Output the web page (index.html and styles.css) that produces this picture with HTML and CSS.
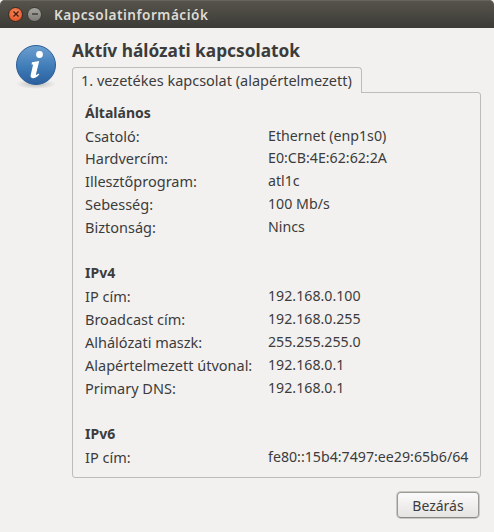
FILE: index.html
```html
<!DOCTYPE html>
<html lang="hu">
<head>
    <meta charset="UTF-8">
    <title>Kapcsolatinformációk</title>
    <link rel="stylesheet" href="styles.css">
</head>
<body>

<div class="window">
    <header class="titlebar">
        <span class="win-btn win-close">
            <svg width="8" height="8" viewBox="0 0 8 8"><path d="M1.5 1.5l5 5M6.5 1.5l-5 5" stroke="#4a1c0c" stroke-width="1.4"/></svg>
        </span>
        <span class="win-btn win-min">
            <svg width="8" height="8" viewBox="0 0 8 8"><path d="M1 4h6" stroke="#3c3b37" stroke-width="1.4"/></svg>
        </span>
        <span class="win-title">Kapcsolatinformációk</span>
    </header>

    <main class="content">
        <div class="icon-col">
            <svg width="42" height="46" viewBox="0 0 42 46">
                <defs>
                    <linearGradient id="ball" x1="0" y1="0" x2="0" y2="1">
                        <stop offset="0" stop-color="#6d9fd0"/>
                        <stop offset="0.55" stop-color="#3f7cb8"/>
                        <stop offset="1" stop-color="#2a5f9c"/>
                    </linearGradient>
                    <radialGradient id="shade" cx="0.5" cy="0.5" r="0.5">
                        <stop offset="0" stop-color="#000" stop-opacity="0.22"/>
                        <stop offset="1" stop-color="#000" stop-opacity="0"/>
                    </radialGradient>
                </defs>
                <ellipse cx="21" cy="40" rx="20" ry="5" fill="url(#shade)"/>
                <circle cx="21" cy="21" r="19.5" fill="url(#ball)" stroke="#2c5f98" stroke-width="1"/>
                <circle cx="24.5" cy="10.5" r="3.4" fill="#fff"/>
                <path d="M17 18.2l7.2-1.2-3.2 13.2c-.2 1 .6 1.2 2.6-.6l.7 1c-2.6 2.8-4.6 3.8-6.6 3.6-1.8-.2-2.4-1.4-2-3.2l2.4-10.4-1.6-.2z" fill="#fff"/>
            </svg>
        </div>

        <div class="main-col">
            <h1 class="heading">Aktív hálózati kapcsolatok</h1>
            <div class="tab">1. vezetékes kapcsolat (alapértelmezett)</div>
            <section class="panel">
                <h2 class="section-title">Általános</h2>
                <div class="row"><span>Csatoló:</span><span>Ethernet (enp1s0)</span></div>
                <div class="row"><span>Hardvercím:</span><span>E0:CB:4E:62:62:2A</span></div>
                <div class="row"><span>Illesztőprogram:</span><span>atl1c</span></div>
                <div class="row"><span>Sebesség:</span><span>100 Mb/s</span></div>
                <div class="row"><span>Biztonság:</span><span>Nincs</span></div>
                <div class="spacer"></div>

                <h2 class="section-title">IPv4</h2>
                <div class="row"><span>IP cím:</span><span>192.168.0.100</span></div>
                <div class="row"><span>Broadcast cím:</span><span>192.168.0.255</span></div>
                <div class="row"><span>Alhálózati maszk:</span><span>255.255.255.0</span></div>
                <div class="row"><span>Alapértelmezett útvonal:</span><span>192.168.0.1</span></div>
                <div class="row"><span>Primary DNS:</span><span>192.168.0.1</span></div>
                <div class="spacer"></div>

                <h2 class="section-title">IPv6</h2>
                <div class="row"><span>IP cím:</span><span>fe80::15b4:7497:ee29:65b6/64</span></div>
            </section>
            <div class="actions">
                <button class="close-btn">Bezárás</button>
            </div>
        </div>
    </main>
</div>

</body>
</html>
```

FILE: styles.css
```css
* {
    margin: 0;
    padding: 0;
    box-sizing: border-box;
}

body {
    width: 494px;
    height: 532px;
    overflow: hidden;
    background: #f2f1f0;
    font-family: "Noto Sans", sans-serif;
    font-size: 14.5px;
    color: #3c3c3c;
}

.window {
    height: 532px;
    background: #f2f1f0;
}

.titlebar {
    height: 28px;
    display: flex;
    align-items: center;
    padding-left: 8px;
    border-radius: 5px 5px 0 0;
    background: linear-gradient(#56544c, #3c3b36);
    box-shadow: inset 0 1px 0 #66645c;
}

.win-btn {
    width: 15px;
    height: 15px;
    border-radius: 50%;
    display: flex;
    align-items: center;
    justify-content: center;
}

.win-close {
    background: radial-gradient(circle at 50% 35%, #f58a5c, #e0491d);
    border: 1px solid #3a2a22;
}

.win-min {
    margin-left: 4px;
    background: linear-gradient(#a5a49e, #7e7d77);
    border: 1px solid #3c3b37;
}

.win-title {
    margin-left: 12px;
    font-size: 13.6px;
    font-weight: 600;
    color: #dfdbd2;
    letter-spacing: 0.5px;
}

.content {
    display: flex;
    padding: 16px 13px 0 15px;
}

.icon-col {
    width: 57px;
    flex: none;
}

.main-col {
    width: 409px;
}

.heading {
    font-size: 17.3px;
    font-weight: 700;
    line-height: 14px;
    height: 23px;
    color: #3c3c3c;
}

.tab {
    width: 290px;
    height: 26px;
    line-height: 24px;
    padding-left: 8px;
    white-space: nowrap;
    background: #f2f1f0;
    border: 1px solid #bdbcb8;
    border-bottom: none;
    border-radius: 4px 4px 0 0;
    margin-bottom: -1px;
    position: relative;
    z-index: 1;
}

.panel {
    height: 386px;
    padding: 8.6px 0 0 12px;
    border: 1px solid #bdbcb8;
    border-radius: 0 3px 3px 3px;
}

.section-title {
    font-size: 14px;
    font-weight: 700;
    line-height: 22.93px;
}

.row {
    display: flex;
    line-height: 22.93px;
    white-space: nowrap;
}

.row span:first-child {
    width: 183px;
    flex: none;
}

.row span:last-child {
    font-size: 14.2px;
}

.spacer {
    height: 22.93px;
}

.actions {
    display: flex;
    justify-content: flex-end;
    padding: 14px 2px 0 0;
}

.close-btn {
    width: 82px;
    height: 26px;
    font-family: inherit;
    font-size: 14px;
    color: #3c3c3c;
    background: linear-gradient(#fbfafa, #e6e4e2);
    border: 1px solid #9b9a96;
    border-bottom-color: #8a8986;
    border-radius: 4px;
    box-shadow: 0 0 0 1px #c9c8c5;
}
```
